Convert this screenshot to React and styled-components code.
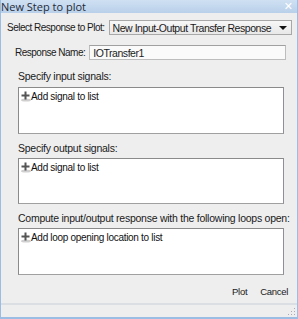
import React from 'react';
import styled, { createGlobalStyle } from 'styled-components';

const GlobalStyle = createGlobalStyle`
  html, body {
    margin: 0;
    padding: 0;
    background: #ffffff;
  }
`;

const Window = styled('div')`
  width: 298px;
  height: 319px;
  box-sizing: border-box;
  display: flex;
  flex-direction: column;
  background: #eeeeee;
  border-left: 1px solid #9bbde3;
  border-right: 1px solid #9bbde3;
  border-bottom: 2px solid #9bbde3;
  font-family: "Liberation Sans", Arial, sans-serif;
  font-size: 10.5px;
  letter-spacing: -0.45px;
  color: #1a1a1a;
  overflow: hidden;
`;

const TitleBar = styled('div')`
  height: 13px;
  margin: 0 -1px;
  display: flex;
  align-items: center;
  justify-content: space-between;
  padding: 0 5px 0 1px;
  background: linear-gradient(#cfe0f2, #b9d0ea);
  font-family: "Open Sans", "DejaVu Sans", sans-serif;
  font-size: 11px;
  letter-spacing: 0;
  color: #1e2a38;
`;

const Close = styled('span')`
  color: #ffffff;
  font-size: 11px;
  font-weight: bold;
  font-family: "DejaVu Sans", sans-serif;
`;

const Content = styled('div')`
  flex: 1;
  display: flex;
  flex-direction: column;
  padding: 7px 5px 0 6px;
`;

const Row = styled('div')`
  display: flex;
  align-items: center;
  padding-left: ${p => p.$indent || 0}px;
  padding-right: ${p => p.$right || 0}px;
  margin-bottom: ${p => p.$gap || 0}px;
`;

const Label = styled('span')`
  white-space: nowrap;
  font-size: 10px;
  letter-spacing: -0.5px;
`;

const Combo = styled('div')`
  flex: 1;
  height: 15px;
  margin-left: 4px;
  box-sizing: border-box;
  display: flex;
  align-items: center;
  justify-content: space-between;
  padding: 0 4px 0 3px;
  background: linear-gradient(#f7f7f7, #e8e8e8);
  border: 1px solid #a8a8a8;
  white-space: nowrap;
`;

const Arrow = styled('span')`
  width: 0;
  height: 0;
  border-left: 4px solid transparent;
  border-right: 4px solid transparent;
  border-top: 4px solid #111;
`;

const TextField = styled('div')`
  flex: 1;
  height: 15px;
  margin-left: 4px;
  box-sizing: border-box;
  display: flex;
  align-items: center;
  padding-left: 3px;
  background: #fafafa;
  border: 1px solid #bdbdbd;
  border-top-color: #a0a0a0;
`;

const Section = styled('div')`
  display: flex;
  flex-direction: column;
  padding-left: 11px;
  width: 266px;
  margin-top: ${p => p.$top || 0}px;
`;

const SectionLabel = styled('span')`
  height: 13px;
  line-height: 13px;
  margin-bottom: ${p => p.$gap || 4}px;
  white-space: nowrap;
  letter-spacing: -0.25px;
`;

const ListBox = styled('div')`
  height: ${p => p.$h || 47}px;
  box-sizing: border-box;
  background: #ffffff;
  border: 1px solid #8a8a8a;
  border-right-color: #8f8f97;
  border-bottom-color: #a0a0a0;
  padding: 3px 0 0 2px;
`;

const AddItem = styled('div')`
  display: flex;
  align-items: center;
  gap: 0;
  font-size: 10px;
  letter-spacing: -0.3px;
  color: #111;
`;

const Buttons = styled('div')`
  display: flex;
  justify-content: flex-end;
  gap: 13px;
  margin-top: auto;
  padding: 0 4px 6px 0;
  font-size: 9.5px;
  letter-spacing: -0.3px;
`;

const Status = styled('div')`
  height: 12px;
  margin: 0 -5px 0 -6px;
  border-top: 2px solid #dbdfe3;
  position: relative;
`;

const Grip = styled('svg')`
  position: absolute;
  right: 1px;
  bottom: 1px;
`;

const PlusIcon = () => (
  <svg width="10" height="11" viewBox="0 0 10 11">
    <ellipse cx="5" cy="9" rx="5" ry="1.6" fill="#cfcfcf" />
    <rect x="0.5" y="3.5" width="8" height="2" fill="#555" />
    <rect x="3.5" y="0.5" width="2" height="8" fill="#555" />
  </svg>
);

const AddRow = ({ children }) => (
  <AddItem>
    <PlusIcon />
    <span>{children}</span>
  </AddItem>
);

const App = () => (
  <>
    <GlobalStyle />
    <Window>
      <TitleBar>
        <span>New Step to plot</span>
        <Close>✕</Close>
      </TitleBar>
      <Content>
        <Row $gap={10}>
          <Label>Select Response to Plot:</Label>
          <Combo>
            <span>New Input-Output Transfer Response</span>
            <Arrow />
          </Combo>
        </Row>
        <Row $indent={8} $right={6}>
          <Label>Response Name:</Label>
          <TextField>IOTransfer1</TextField>
        </Row>
        <Section $top={10}>
          <SectionLabel $gap={4}>Specify input signals:</SectionLabel>
          <ListBox $h={47}>
            <AddRow>Add signal to list</AddRow>
          </ListBox>
        </Section>
        <Section $top={8}>
          <SectionLabel $gap={3}>Specify output signals:</SectionLabel>
          <ListBox $h={46}>
            <AddRow>Add signal to list</AddRow>
          </ListBox>
        </Section>
        <Section $top={8}>
          <SectionLabel $gap={3}>Compute input/output response with the following loops open:</SectionLabel>
          <ListBox $h={47}>
            <AddRow>Add loop opening location to list</AddRow>
          </ListBox>
        </Section>
        <Buttons>
          <span>Plot</span>
          <span>Cancel</span>
        </Buttons>
        <Status>
          <Grip width="8" height="8" viewBox="0 0 8 8">
            <rect x="6" y="0" width="1" height="1" fill="#aab" />
            <rect x="3" y="3" width="1" height="1" fill="#aab" />
            <rect x="6" y="3" width="1" height="1" fill="#aab" />
            <rect x="0" y="6" width="1" height="1" fill="#aab" />
            <rect x="3" y="6" width="1" height="1" fill="#aab" />
            <rect x="6" y="6" width="1" height="1" fill="#aab" />
          </Grip>
        </Status>
      </Content>
    </Window>
  </>
);

export default App;
